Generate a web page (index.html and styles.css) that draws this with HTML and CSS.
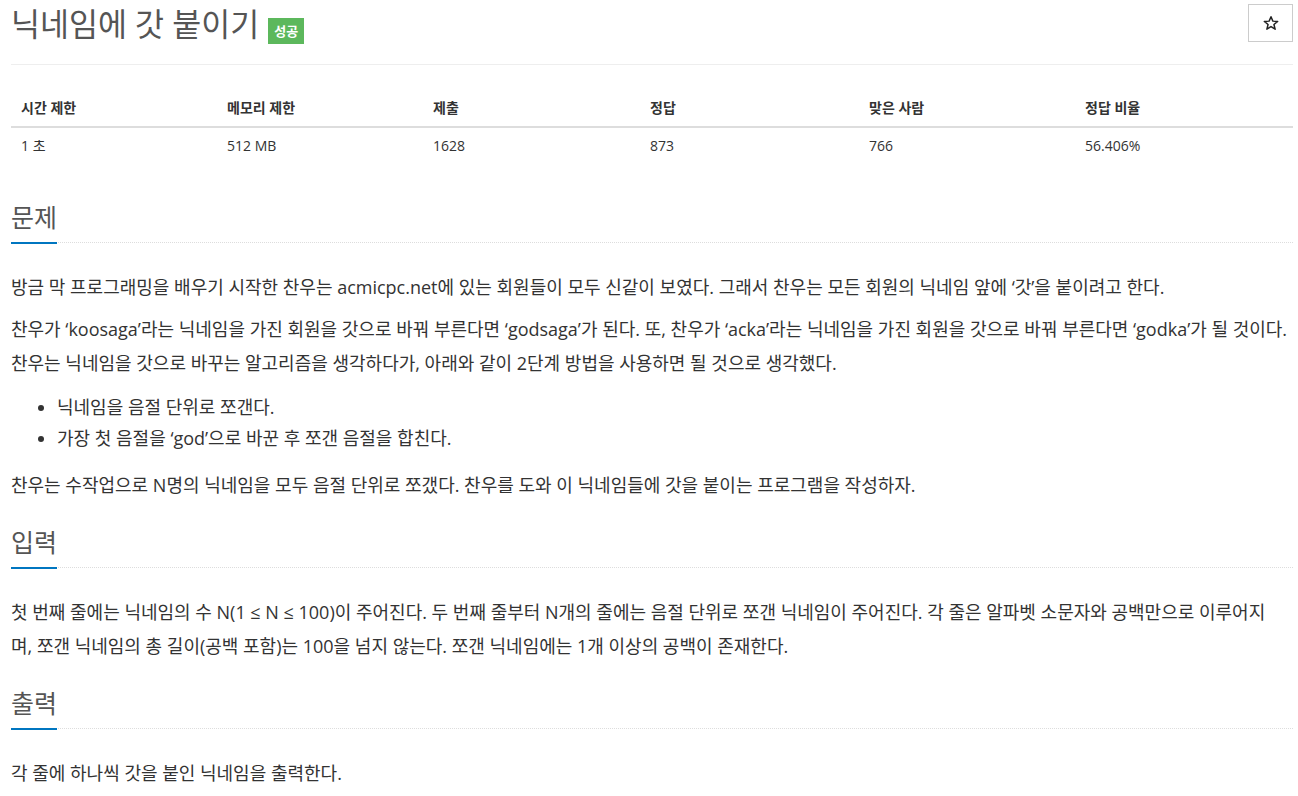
FILE: index.html
```html
<!DOCTYPE html>
<html lang="ko">
<head>
<meta charset="utf-8">
<title>닉네임에 갓 붙이기</title>
<link rel="stylesheet" href="styles.css">
</head>
<body>
<div class="page">
  <div class="title-row">
    <h1 class="title">닉네임에 갓 붙이기</h1>
    <span class="badge">성공</span>
    <button class="star-btn" type="button" aria-label="즐겨찾기">
      <svg width="16" height="16" viewBox="0 0 24 24"><polygon points="12,2.5 14.8,9.2 22,9.6 16.4,14.2 18.2,21.3 12,17.3 5.8,21.3 7.6,14.2 2,9.6 9.2,9.2" fill="none" stroke="#222" stroke-width="2.2" stroke-linejoin="round"/></svg>
    </button>
  </div>
  <hr class="rule">
  <table class="info">
    <thead>
      <tr><th>시간 제한</th><th>메모리 제한</th><th>제출</th><th>정답</th><th>맞은 사람</th><th>정답 비율</th></tr>
    </thead>
    <tbody>
      <tr><td>1 초</td><td>512 MB</td><td>1628</td><td>873</td><td>766</td><td>56.406%</td></tr>
    </tbody>
  </table>

  <section class="section">
    <div class="headline"><h2>문제</h2></div>
    <div class="text">
      <p>방금 막 프로그래밍을 배우기 시작한 찬우는 acmicpc.net에 있는 회원들이 모두 신같이 보였다. 그래서 찬우는 모든 회원의 닉네임 앞에 ‘갓’을 붙이려고 한다.</p>
      <p>찬우가 ‘koosaga’라는 닉네임을 가진 회원을 갓으로 바꿔 부른다면 ‘godsaga’가 된다. 또, 찬우가 ‘acka’라는 닉네임을 가진 회원을 갓으로 바꿔 부른다면 ‘godka’가 될 것이다.<br>찬우는 닉네임을 갓으로 바꾸는 알고리즘을 생각하다가, 아래와 같이 2단계 방법을 사용하면 될 것으로 생각했다.</p>
      <ul>
        <li>닉네임을 음절 단위로 쪼갠다.</li>
        <li>가장 첫 음절을 ‘god’으로 바꾼 후 쪼갠 음절을 합친다.</li>
      </ul>
      <p>찬우는 수작업으로 N명의 닉네임을 모두 음절 단위로 쪼갰다. 찬우를 도와 이 닉네임들에 갓을 붙이는 프로그램을 작성하자.</p>
    </div>
  </section>

  <section class="section">
    <div class="headline"><h2>입력</h2></div>
    <div class="text">
      <p>첫 번째 줄에는 닉네임의 수 N(1 ≤ N ≤ 100)이 주어진다. 두 번째 줄부터 N개의 줄에는 음절 단위로 쪼갠 닉네임이 주어진다. 각 줄은 알파벳 소문자와 공백만으로 이루어지<br>며, 쪼갠 닉네임의 총 길이(공백 포함)는 100을 넘지 않는다. 쪼갠 닉네임에는 1개 이상의 공백이 존재한다.</p>
    </div>
  </section>

  <section class="section">
    <div class="headline"><h2>출력</h2></div>
    <div class="text">
      <p>각 줄에 하나씩 갓을 붙인 닉네임을 출력한다.</p>
    </div>
  </section>
</div>
</body>
</html>
```
FILE: styles.css
```css
html, body {
  margin: 0;
  padding: 0;
  background: #fff;
}
body {
  font-family: "Open Sans", "Noto Sans CJK KR", sans-serif;
  color: #333;
  font-size: 14px;
  line-height: 20px;
}
.page {
  padding: 4px 5px 0 11px;
}
.title-row {
  display: flex;
  align-items: flex-end;
  height: 40px;
}
.title {
  margin: 0;
  font-size: 31.5px;
  line-height: 40px;
  font-weight: 400;
  color: #555;
  white-space: nowrap;
}
.badge {
  margin-left: 9px;
  height: 26px;
  line-height: 26px;
  padding: 0 6px;
  background: #5cb85c;
  color: #fff;
  font-size: 13px;
  font-weight: 700;
}
.star-btn {
  margin-left: auto;
  align-self: flex-start;
  width: 45px;
  height: 38px;
  background: #fff;
  border: 1px solid #ccc;
  border-radius: 0;
  padding: 0;
  display: flex;
  align-items: center;
  justify-content: center;
}
.rule {
  margin: 20px 0 0;
  border: 0;
  border-top: 1px solid #eee;
  height: 0;
}
.info {
  margin-top: 25px;
  width: 100%;
  border-collapse: collapse;
  table-layout: fixed;
}
.info th, .info td {
  text-align: left;
  padding: 8px 10px;
  line-height: 20px;
  font-size: 14px;
}
.info th {
  font-weight: 700;
  color: #333;
  border-bottom: 2px solid #ddd;
}
.info th:nth-child(1), .info th:nth-child(2) { width: 186px; }
.info th:nth-child(3) { width: 197px; }
.info th:nth-child(4) { width: 199px; }
.info th:nth-child(5) { width: 196px; }
.info td { color: #333; }

.section {
  margin-top: 26px;
}
.info + .section {
  margin-top: 39px;
}
.headline {
  border-bottom: 1px dotted #ddd;
  margin: 0 0 27px;
}
.headline h2 {
  display: inline-block;
  margin: 0 0 -2px;
  padding-bottom: 11px;
  border-bottom: 2px solid #0076c0;
  font-size: 25px;
  line-height: 28px;
  font-weight: 400;
  color: #555;
}
.text {
  font-size: 18px;
  color: #333;
}
.text p {
  margin: 0 0 8px;
  line-height: 34px;
}
.text ul {
  margin: 12px 0 14px;
  padding-left: 46px;
}
.text li {
  line-height: 31px;
}
```
